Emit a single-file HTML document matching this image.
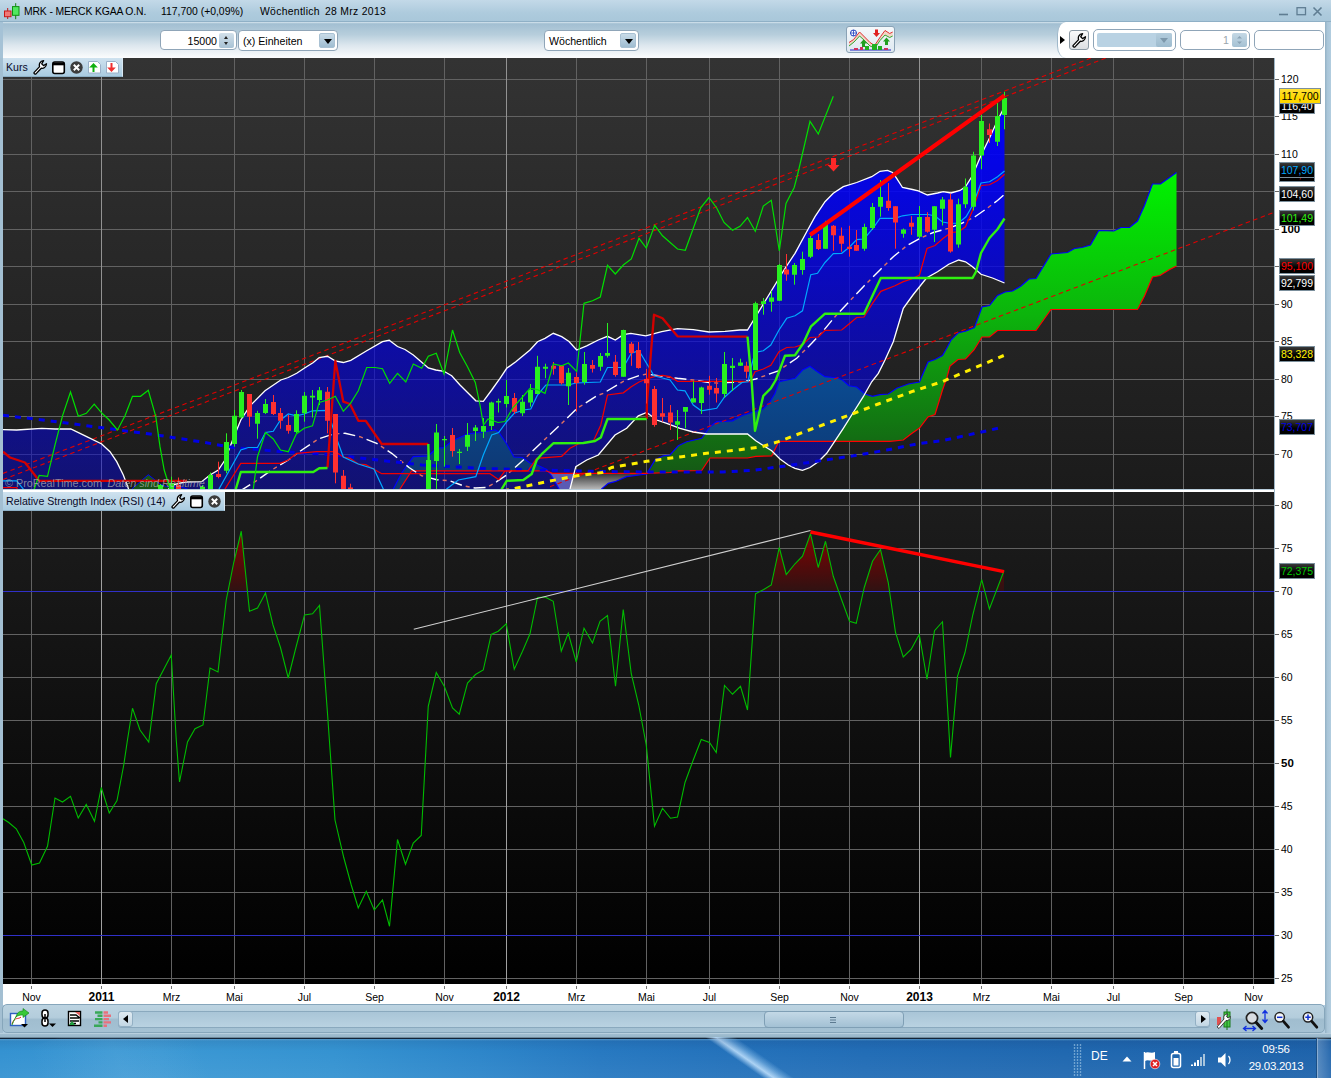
<!DOCTYPE html>
<html lang="de">
<head>
<meta charset="utf-8">
<title>MRK - MERCK KGAA O.N.</title>
<style>
*{box-sizing:border-box}
html,body{margin:0;padding:0}
body{width:1331px;height:1081px;position:relative;overflow:hidden;background:#b4cfe2;font-family:"Liberation Sans",sans-serif;font-size:10.5px;color:#000}
.abs{position:absolute}
#titlebar{position:absolute;left:0;top:0;width:1331px;height:22px;background:linear-gradient(#c3d9e8,#aecbdd 60%,#a9c7da);border-bottom:1px solid #8fb0c6}
#titlebar span{position:absolute;top:6px;font-size:10.4px;white-space:pre;color:#000}
#toolbar{position:absolute;left:0;top:22px;width:1331px;height:36px;background:linear-gradient(#d9e7f0 0,#a2bfd2 5%,#b7cedc 35%,#dde7ee 65%,#fbfcfd 100%)}
#toolbar:before{content:"";position:absolute;left:0;top:0;width:3px;height:36px;background:#a5c2d6}
.box{position:absolute;background:#fff;border:1px solid #8fa5b8;border-radius:4px;height:21px;top:8px}
.box span{position:absolute;top:3.5px;font-size:10.6px;white-space:pre}
.dd{position:absolute;top:2px;width:16px;height:15px;border-radius:2px;background:linear-gradient(#c9dbe8,#9fbdd1);border:1px solid #a9c1d3}
.dd:after{content:"";position:absolute;left:3.5px;top:5px;border:4px solid transparent;border-top:5px solid #000;border-bottom:0}
.spin{position:absolute;top:2px;width:15px;height:15px;border-radius:2px;background:linear-gradient(#d2e0ea,#a8c2d4)}
.spin:before{content:"";position:absolute;left:5px;top:3px;border:2.5px solid transparent;border-bottom:3px solid #222;border-top:0}
.spin:after{content:"";position:absolute;left:5px;top:9px;border:2.5px solid transparent;border-top:3px solid #222;border-bottom:0}
#rpanel{position:absolute;left:1057px;top:0px;width:268px;height:36px;background:#fff;border-top-left-radius:9px 12px;border-bottom-left-radius:9px 12px;border-left:1px solid #9fb8ca}
.chart{position:absolute;display:block}
#axisR{position:absolute;left:1274px;top:58px;width:51px;height:947px;background:#fff;border-left:1px solid #9db6c7}
#frameR{position:absolute;left:1325px;top:22px;width:6px;height:1016px;background:linear-gradient(90deg,#93b1c5,#a9c5d8 40%,#b2cddf)}
#frameL{position:absolute;left:0;top:58px;width:3px;height:980px;background:#a3bfd2}
#sep{position:absolute;left:3px;top:489px;width:1272px;height:3.5px;background:linear-gradient(#8fb0c6,#ffffff 35%,#ffffff 65%,#8fb0c6)}
.tick{position:absolute;left:1275px;width:4px;height:1px;background:#666}
.al{position:absolute;left:1281px;font-size:10.5px;line-height:13px;color:#000}
.al.b{font-weight:bold;font-size:11.5px}
.pl{position:absolute;left:1279px;width:36px;height:16px;border:1px solid #7b8f9c;font-size:10.5px;line-height:14px;text-align:center;white-space:nowrap;background-image:linear-gradient(rgba(255,255,255,.22),rgba(255,255,255,0) 60%)}
.pl.w{width:42px}
.tab{position:absolute;left:3px;height:19px;background:linear-gradient(#cfe2ef,#a9cbe0);border-right:1px solid #d9e8f2;border-bottom:1px solid #8eb0c6;font-size:10.6px;color:#0a0a28}
.tab span{position:absolute;left:3px;top:3px;white-space:nowrap}
.tab svg{position:absolute;top:2px}
#xaxis{position:absolute;left:3px;top:984px;width:1272px;height:21px;background:#fff}
.xt{position:absolute;top:986px;width:1px;height:3px;background:#777}
.xl{position:absolute;top:991px;width:60px;text-align:center;font-size:10.5px;line-height:13px}
.xl.yr{font-weight:bold;font-size:12px;top:991px}
#btool{position:absolute;left:2px;top:1004px;width:1323px;height:29px;border:1px solid #86a6bb;border-radius:5px;background:linear-gradient(#bcd3e1 0,#b4cddc 46%,#a0bdcf 54%,#a5c2d4 100%)}
#track{position:absolute;left:118px;top:1011px;width:1092px;height:17px;border:1px solid #8aa9be;border-radius:3px;background:linear-gradient(#a9c5d7,#b9d2e1)}
#thumb{position:absolute;left:764px;top:1011px;width:140px;height:17px;border:1px solid #7f9fb5;border-radius:4px;background:linear-gradient(#c3d8e6,#a3c1d4)}
.sbtn{position:absolute;top:1011px;width:15px;height:16px;border:1px solid #93b0c4;border-radius:3px;background:linear-gradient(#e0ebf2,#c3d7e4)}
#botframe{position:absolute;left:0;top:1033px;width:1331px;height:4px;background:linear-gradient(#c8dce8 0,#a0bdd0 30%,#98b6c9 100%)}
#taskbar{position:absolute;left:0;top:1037px;width:1331px;height:44px;overflow:hidden;
 background:linear-gradient(to bottom,#6f899b 0,#6f899b 1px,#142739 1px,#142739 2px,rgba(110,180,225,.75) 2px,rgba(110,180,225,0) 4px,rgba(0,0,0,0) 4px),linear-gradient(90deg,#3492d1 0,#3b98d4 12%,#3593d1 25%,#2d86ca 36%,#2779c1 45%,#2472bb 55%,#226db6 65%,#2068b0 80%,#1e63ab 100%)}
#taskbar>*{margin-top:1px}
#taskbar .shade{position:absolute;left:0;top:0;width:100%;height:100%;background:linear-gradient(rgba(0,0,40,.10),rgba(255,255,255,0) 30%,rgba(255,255,255,.06))}
#taskbar .tx{position:absolute;color:#fff;font-size:11.5px;white-space:nowrap;letter-spacing:-0.3px}
</style>
</head>
<body>
<div id="titlebar">
<svg class="abs" style="left:4px;top:1px" width="18" height="20" viewBox="0 0 18 20"><path d="M3.700 7v11" stroke="#c01818" stroke-width="1"/><rect x="0.500" y="10" width="6.500" height="5.700" fill="#f07878" stroke="#c81818"/><path d="M11.700 2.200v16" stroke="#108010"/><rect x="8.500" y="5.600" width="6.500" height="8.700" fill="#50e860" stroke="#109010"/></svg>
<span style="left:24px;letter-spacing:-0.15px">MRK - MERCK KGAA O.N.</span><span style="left:161px">117,700 (+0,09%)</span><span style="left:260px;letter-spacing:0.3px">Wöchentlich</span><span style="left:325px;letter-spacing:0.3px">28 Mrz 2013</span>
<svg class="abs" style="left:1276px;top:4px" width="50" height="14" viewBox="0 0 50 14"><path d="M3 10.5h9" stroke="#5f7d92" stroke-width="1.6"/><rect x="21" y="3.7" width="8.5" height="7" fill="none" stroke="#5f7d92" stroke-width="1.3"/><path d="M37.5 3.5l8 8M45.5 3.5l-8 8" stroke="#5f7d92" stroke-width="1.6"/></svg>
</div>
<div id="toolbar">
<div class="box" style="left:160px;width:77px;height:20px"><span style="right:19px">15000</span><div class="spin" style="left:58px"></div></div>
<div class="box" style="left:238px;width:100px"><span style="left:4px">(x) Einheiten</span><div class="dd" style="left:80px"></div></div>
<div class="box" style="left:544px;width:95px"><span style="left:4px">Wöchentlich</span><div class="dd" style="left:75px"></div></div>
<div class="abs" style="left:846px;top:4px;width:49px;height:27px;border:1px solid #8aa2b5;border-radius:3px;background:linear-gradient(#f4f8fb,#dfe9f1)">
<svg class="abs" style="left:1px;top:1px" width="45" height="23" viewBox="0 0 45 23"><path d="M1 14.500 L5.600 11.500 L11.600 4 L17.600 10 L22 14.500 L26.600 17.500 L32.600 8.500 L37 2.500 L41.700 5.500 L44.700 4 V8 L41.700 9.500 L37 7 L32 12.500 L27 20 L22 18 L17 13 L11.600 8 L6 14 L1 18z" fill="#f4c8b0" fill-opacity=".7"/><path d="M1 14.500 L5.600 11.500 L11.600 4 L17.600 10 L22 14.500 L26.600 17.500 L32.600 8.500 L37 2.500 L41.700 5.500 L44.700 4" stroke="#e03030" fill="none" stroke-width="1"/><path d="M1 18 L6 14 L11.600 8 L17 13 L22 18 L27 20 L32 12.500 L37 7 L41.700 9.500 L44.700 8" stroke="#30a830" fill="none" stroke-width="1"/><circle cx="5.500" cy="5" r="3" fill="#fff" stroke="#2040c0"/><path d="M5.500 2v6M2.500 5h6" stroke="#2040c0" stroke-width=".8"/><path d="M27 1.500h3v3.500h2l-3.500 4-3.500-4h2z" fill="#e02020"/><path d="M14 19h3v-3.500h2l-3.500-4-3.500 4h2z M37 17h3v-3.500h2l-3.500-4-3.500 4h2z" fill="#20a020"/><path d="M2 22h41" stroke="#2020c0"/><path d="M6 20h4v2h-4z M12 19h3v3h-3z M36 20h4v2h-4z" fill="#d03060"/><path d="M17 18h4v4h-4z M24 16h5v6h-5z M30 18h4v4h-4z" fill="#20b020"/></svg>
</div>
<div id="rpanel">
<svg class="abs" style="left:1px;top:13px" width="7" height="10" viewBox="0 0 7 10"><path d="M1 1l5 4-5 4z" fill="#000"/></svg>
<div class="abs" style="left:11px;top:8px;width:20px;height:20px;border:1px solid #8c9aa5;border-radius:3px;background:linear-gradient(#fafafa,#dcdfe2)"><svg class="abs" style="left:2px;top:1.500px" width="15" height="15" viewBox="0 0 15 15"><path d="M1.200 12.400 L6.600 6.600 C5.700 4 7 1.200 10.600 0.700 L8.700 3.800 L10.500 5.600 L13.500 3.800 C13.300 7.400 10.300 8.700 8.300 8.200 L3 13.900 C2 14.600 0.500 13.400 1.200 12.400z" fill="#fff" stroke="#000" stroke-width="1.300" stroke-linejoin="round"/></svg></div>
<div class="box" style="left:35px;top:7px;width:83px;height:22px;border-radius:5px"><div class="abs" style="left:3px;top:3px;width:75px;height:14px;background:#b9d2e3;border-radius:2px"></div><div class="abs" style="left:62px;top:3px;width:16px;height:14px;background:linear-gradient(#b4cddd,#9dbbce);border-radius:2px"></div><div class="abs" style="left:66px;top:8px;border:4px solid transparent;border-top:5px solid #7d98ab;border-bottom:0"></div></div>
<div class="box" style="left:122px;top:8px;width:70px;height:20px;border-radius:5px"><span style="right:20px;top:3px;color:#9aa5ad">1</span><div class="abs" style="left:51px;top:2px;width:15px;height:14px;border-radius:2px;background:linear-gradient(#c4d8e5,#a5c1d3)"><svg class="abs" style="left:4px;top:2px" width="7" height="10" viewBox="0 0 7 10"><path d="M1 3.500l2.500-2.500 2.500 2.500zM1 6.500l2.500 2.500 2.500-2.500z" fill="#8aa3b5"/></svg></div></div>
<div class="box" style="left:196px;top:8px;width:70px;height:20px;border-radius:5px"></div>
</div>
</div>
<div id="frameL"></div>
<svg class="chart" style="left:3px;top:58px" width="1272" height="431" viewBox="3 58 1272 431">
<defs>
<linearGradient id="bgp" x1="0" y1="58" x2="0" y2="489" gradientUnits="userSpaceOnUse"><stop offset="0" stop-color="#333333"/><stop offset="1" stop-color="#1b1b1b"/></linearGradient>
<linearGradient id="boll" x1="0" y1="58" x2="0" y2="489" gradientUnits="userSpaceOnUse"><stop offset="0" stop-color="#0000ff" stop-opacity="1"/><stop offset="0.306" stop-color="#0000f9" stop-opacity="0.87"/><stop offset="0.677" stop-color="#0402df" stop-opacity="0.68"/><stop offset="0.921" stop-color="#0808c8" stop-opacity="0.56"/><stop offset="1" stop-color="#0909c1" stop-opacity="0.52"/></linearGradient>
<linearGradient id="cg" x1="0" y1="172" x2="0" y2="489" gradientUnits="userSpaceOnUse"><stop offset="0" stop-color="#00f400"/><stop offset="0.45" stop-color="#0cb40c"/><stop offset="1" stop-color="#165016"/></linearGradient>
<linearGradient id="cgrey" x1="0" y1="473" x2="0" y2="492" gradientUnits="userSpaceOnUse"><stop offset="0" stop-color="#303030"/><stop offset="1" stop-color="#d0d0d0"/></linearGradient>
<linearGradient id="teal" x1="0" y1="360" x2="0" y2="489" gradientUnits="userSpaceOnUse"><stop offset="0" stop-color="#0a4e96"/><stop offset="1" stop-color="#0e3670"/></linearGradient>
<clipPath id="bclip"><polygon points="3,429.7 16.7,430 41.7,428.3 55,429 70.8,429 86.7,436.7 101.7,444 110,451.7 116.7,461.7 123.3,475 128.3,488.3 131,496 131,500 3,500"/><polygon points="163,496 172,485 185,482 201.7,481.7 210,475 218.3,470 225,460 233.3,438.3 240.8,420 250,405.8 265,390.8 280.8,380 288.3,377.5 296.7,373.3 304.2,368.3 313.3,362.5 319.2,357.5 327.5,356.3 335,360.8 343.3,362.5 350.8,360.3 366.7,350.8 382.5,341.7 389.2,340.3 397.5,346.5 405,349.5 413.3,355 420,360.8 428.3,368 435.8,370 444,371.3 451.7,375.8 460,385 468.3,393.3 475.8,400.8 483.3,401.3 491.7,390 500,378.3 506.7,368.3 515.8,361.7 520,358.3 530,350 537.5,341.7 545,338.3 553.3,333.3 561.7,336.7 569,341.5 576.7,350 586.7,345.8 598.3,340 607.5,336.3 615.3,340 623.3,334.7 630.8,333.3 645.8,335.8 661.7,331.7 677.5,328.7 693.3,329.7 709,332 725,331.3 740,330 747.5,330 784,270 795,253.3 806.7,231.7 815,216.7 825,201.7 833.3,193.3 843.3,186.7 856.7,182.5 871.7,176.7 880,171.3 887.5,170.3 892.5,172.5 896.7,178.3 902.5,187.5 912.5,189.5 918.3,190.8 927.5,195 937.5,193 943.3,191.7 951,193 960,190.5 965.5,186.75 972.5,175.5 981,155.5 989.5,138 997.5,120.5 1004.5,106.75 1004.5,283 992.5,278 981,274.25 972.5,266.75 965.5,261.75 958.75,260 948.75,264.25 937.5,271.75 926.5,278 913.3,294.5 903.3,308.3 898.3,325 893.3,341.7 885,360 878.3,373.3 871.7,381.8 863.3,396.7 853.3,412.5 843.3,428.3 835,440.8 826.7,453.3 818.3,461.7 810,467.5 802.5,470.3 795,468.3 788.3,465 780,459 771.7,450.8 755.8,440.8 747.5,434 706.7,434 693.3,432 680,428.3 666.7,423.3 656.7,420 646.7,412.5 638.3,415.8 626.7,428.3 615,435 598.3,455 586.7,460 575.8,466.7 570,489 569,496 163,500"/></clipPath>
</defs>
<rect x="3" y="58" width="1272" height="431" fill="url(#bgp)"/>
<path d="M3 79.5 H1275 M3 116.5 H1275 M3 154.5 H1275 M3 191.5 H1275 M3 229.5 H1275 M3 266.5 H1275 M3 304.5 H1275 M3 341.5 H1275 M3 379.5 H1275 M3 416.5 H1275 M3 454.5 H1275 M31.5 58 V489 M171.5 58 V489 M234.5 58 V489 M304.5 58 V489 M374.5 58 V489 M444.5 58 V489 M576.5 58 V489 M646.5 58 V489 M709.5 58 V489 M779.5 58 V489 M849.5 58 V489 M981.5 58 V489 M1051.5 58 V489 M1113.5 58 V489 M1183.5 58 V489 M1253.5 58 V489" stroke="#626262" stroke-width="1" fill="none"/>
<path d="M101.5 58 V489 M506.5 58 V489 M919.5 58 V489" stroke="#929292" stroke-width="1" fill="none"/>
<polygon points="131.7,489 148.3,474.7 160,484 166.7,486.7 183.3,487.5 195,492 195,496 131.7,496" fill="url(#cg)"/>
<polygon points="393.3,489 401.7,473 413.3,456.7 428.3,455.8 436.7,448.3 444,447.5 452.5,440.8 467.5,434 483.3,432 495,430 498.7,432 506.7,444 514,457 522.5,457.5 530,463 536.7,464.7 546.7,469.5 546,470.8 411.7,470.8 400,489 396,496" fill="url(#cg)"/>
<polygon points="546.7,470.8 552.5,473.3 646.7,473.3 646.7,474 626.7,476.7 615,481.7 608.3,483.3 601.7,489 598,496 561,496 559,489 551.7,476 546.7,469.5" fill="url(#cgrey)"/>
<polygon points="646.7,474 655,460 663.3,455.8 670,455 678.3,445.8 686.7,441.7 701.7,438.3 710,426.7 716.7,421.7 723.3,421.3 732.5,420.8 741.7,415.8 751.7,412.5 763.3,409 770,401.7 775,393.3 779,381.7 795,378.3 802.5,370 810,366.3 817.5,371.7 825,376.7 838.3,378 842.5,380 849,385.8 856.7,387 865,394 872.5,396.3 880,394.7 888.3,394 896.7,388.3 908.3,384 919.5,382 928,362 935,359.5 942.5,355.5 946.7,348.3 951,340 958,333 966,331 974.5,327.5 982,307 989.5,305.5 997.5,295.5 1005,292 1012.5,291 1021,286 1029,279 1036,278.5 1051,254 1067.5,252.5 1074.5,248.5 1082,247.5 1090.5,245 1098.75,230.5 1113.75,231 1121,227.5 1129.5,227.5 1137.5,221 1144.5,205.5 1152.5,184 1160.5,184 1176.5,172.5 1176.5,266 1168.75,270 1160,275.5 1152.5,277 1144.5,296 1137.5,309.5 1051,309.5 1036,330.5 997.5,330.5 989.5,337 982,337 974,350 965.5,359 958,359.5 950,366 946.7,378.3 942.5,390 935,414.5 928,417 919.5,428 911,434 903.3,440 890,441.3 779,441.3 771.7,455.8 755.8,456.3 747.5,458 710,458 701.7,470.5 678.3,470.8 670,472.5 646.7,473.3" fill="url(#cg)"/>
<polygon points="3,429.7 16.7,430 41.7,428.3 55,429 70.8,429 86.7,436.7 101.7,444 110,451.7 116.7,461.7 123.3,475 128.3,488.3 131,496 131,500 3,500" fill="url(#boll)"/>
<polygon points="163,496 172,485 185,482 201.7,481.7 210,475 218.3,470 225,460 233.3,438.3 240.8,420 250,405.8 265,390.8 280.8,380 288.3,377.5 296.7,373.3 304.2,368.3 313.3,362.5 319.2,357.5 327.5,356.3 335,360.8 343.3,362.5 350.8,360.3 366.7,350.8 382.5,341.7 389.2,340.3 397.5,346.5 405,349.5 413.3,355 420,360.8 428.3,368 435.8,370 444,371.3 451.7,375.8 460,385 468.3,393.3 475.8,400.8 483.3,401.3 491.7,390 500,378.3 506.7,368.3 515.8,361.7 520,358.3 530,350 537.5,341.7 545,338.3 553.3,333.3 561.7,336.7 569,341.5 576.7,350 586.7,345.8 598.3,340 607.5,336.3 615.3,340 623.3,334.7 630.8,333.3 645.8,335.8 661.7,331.7 677.5,328.7 693.3,329.7 709,332 725,331.3 740,330 747.5,330 784,270 795,253.3 806.7,231.7 815,216.7 825,201.7 833.3,193.3 843.3,186.7 856.7,182.5 871.7,176.7 880,171.3 887.5,170.3 892.5,172.5 896.7,178.3 902.5,187.5 912.5,189.5 918.3,190.8 927.5,195 937.5,193 943.3,191.7 951,193 960,190.5 965.5,186.75 972.5,175.5 981,155.5 989.5,138 997.5,120.5 1004.5,106.75 1004.5,283 992.5,278 981,274.25 972.5,266.75 965.5,261.75 958.75,260 948.75,264.25 937.5,271.75 926.5,278 913.3,294.5 903.3,308.3 898.3,325 893.3,341.7 885,360 878.3,373.3 871.7,381.8 863.3,396.7 853.3,412.5 843.3,428.3 835,440.8 826.7,453.3 818.3,461.7 810,467.5 802.5,470.3 795,468.3 788.3,465 780,459 771.7,450.8 755.8,440.8 747.5,434 706.7,434 693.3,432 680,428.3 666.7,423.3 656.7,420 646.7,412.5 638.3,415.8 626.7,428.3 615,435 598.3,455 586.7,460 575.8,466.7 570,489 569,496 163,500" fill="url(#boll)"/>
<g clip-path="url(#bclip)">
<polygon points="393.3,489 401.7,473 413.3,456.7 428.3,455.8 436.7,448.3 444,447.5 452.5,440.8 467.5,434 483.3,432 495,430 498.7,432 506.7,444 514,457 522.5,457.5 530,463 536.7,464.7 546.7,469.5 546,470.8 411.7,470.8 400,489 396,496" fill="url(#teal)"/>
<polygon points="546.7,470.8 552.5,473.3 646.7,473.3 646.7,474 626.7,476.7 615,481.7 608.3,483.3 601.7,489 598,496 561,496 559,489 551.7,476 546.7,469.5" fill="#5a5ab4"/>
<polygon points="646.7,474 655,460 663.3,455.8 670,455 678.3,445.8 686.7,441.7 701.7,438.3 710,426.7 716.7,421.7 723.3,421.3 732.5,420.8 741.7,415.8 751.7,412.5 763.3,409 770,401.7 775,393.3 779,381.7 795,378.3 802.5,370 810,366.3 817.5,371.7 825,376.7 838.3,378 842.5,380 849,385.8 856.7,387 865,394 872.5,396.3 880,394.7 888.3,394 896.7,388.3 908.3,384 919.5,382 928,362 935,359.5 942.5,355.5 946.7,348.3 951,340 958,333 966,331 974.5,327.5 982,307 989.5,305.5 997.5,295.5 1005,292 1012.5,291 1021,286 1029,279 1036,278.5 1051,254 1067.5,252.5 1074.5,248.5 1082,247.5 1090.5,245 1098.75,230.5 1113.75,231 1121,227.5 1129.5,227.5 1137.5,221 1144.5,205.5 1152.5,184 1160.5,184 1176.5,172.5 1176.5,266 1168.75,270 1160,275.5 1152.5,277 1144.5,296 1137.5,309.5 1051,309.5 1036,330.5 997.5,330.5 989.5,337 982,337 974,350 965.5,359 958,359.5 950,366 946.7,378.3 942.5,390 935,414.5 928,417 919.5,428 911,434 903.3,440 890,441.3 779,441.3 771.7,455.8 755.8,456.3 747.5,458 710,458 701.7,470.5 678.3,470.8 670,472.5 646.7,473.3" fill="url(#teal)"/>
</g>
<polyline points="131.7,489 148.3,474.7 160,484 166.7,486.7 183.3,487.5 195,492" fill="none" stroke="#0000ff" stroke-width="1" />
<polyline points="393.3,489 401.7,473 413.3,456.7 428.3,455.8 436.7,448.3 444,447.5 452.5,440.8 467.5,434 483.3,432 495,430 498.7,432 506.7,444 514,457 522.5,457.5 530,463 536.7,464.7 546.7,469.5 551.7,476 559,489 561,496" fill="none" stroke="#0000ff" stroke-width="1.2" />
<polyline points="598,496 601.7,489 608.3,483.3 615,481.7 626.7,476.7 646.7,474 655,460 663.3,455.8 670,455 678.3,445.8 686.7,441.7 701.7,438.3 710,426.7 716.7,421.7 723.3,421.3 732.5,420.8 741.7,415.8 751.7,412.5 763.3,409 770,401.7 775,393.3 779,381.7 795,378.3 802.5,370 810,366.3 817.5,371.7 825,376.7 838.3,378 842.5,380 849,385.8 856.7,387 865,394 872.5,396.3 880,394.7 888.3,394 896.7,388.3 908.3,384 919.5,382 928,362 935,359.5 942.5,355.5 946.7,348.3 951,340 958,333 966,331 974.5,327.5 982,307 989.5,305.5 997.5,295.5 1005,292 1012.5,291 1021,286 1029,279 1036,278.5 1051,254 1067.5,252.5 1074.5,248.5 1082,247.5 1090.5,245 1098.75,230.5 1113.75,231 1121,227.5 1129.5,227.5 1137.5,221 1144.5,205.5 1152.5,184 1160.5,184 1176.5,172.5" fill="none" stroke="#0000ff" stroke-width="1.2" />
<polyline points="396,496 400,489 411.7,470.8 546,470.8 552.5,473.3 646.7,473.3 670,472.5 678.3,470.8 701.7,470.5 710,458 747.5,458 755.8,456.3 771.7,455.8 779,441.3 890,441.3 903.3,440 911,434 919.5,428 928,417 935,414.5 942.5,390 946.7,378.3 950,366 958,359.5 965.5,359 974,350 982,337 989.5,337 997.5,330.5 1036,330.5 1051,309.5 1137.5,309.5 1144.5,296 1152.5,277 1160,275.5 1168.75,270 1176.5,266" fill="none" stroke="#ff0000" stroke-width="1.2" />
<path d="M3 473.4 L1091 58 M3 479.5 L1106 58 M550 486.7 L1275 212" stroke="#e00000" stroke-width="1.1" fill="none" stroke-dasharray="4.5 3.5"/>
<polyline points="3,429.7 16.7,430 41.7,428.3 55,429 70.8,429 86.7,436.7 101.7,444 110,451.7 116.7,461.7 123.3,475 128.3,488.3 131,496" fill="none" stroke="#ffffff" stroke-width="1.3" />
<polyline points="163,496 172,485 185,482 201.7,481.7 210,475 218.3,470 225,460 233.3,438.3 240.8,420 250,405.8 265,390.8 280.8,380 288.3,377.5 296.7,373.3 304.2,368.3 313.3,362.5 319.2,357.5 327.5,356.3 335,360.8 343.3,362.5 350.8,360.3 366.7,350.8 382.5,341.7 389.2,340.3 397.5,346.5 405,349.5 413.3,355 420,360.8 428.3,368 435.8,370 444,371.3 451.7,375.8 460,385 468.3,393.3 475.8,400.8 483.3,401.3 491.7,390 500,378.3 506.7,368.3 515.8,361.7 520,358.3 530,350 537.5,341.7 545,338.3 553.3,333.3 561.7,336.7 569,341.5 576.7,350 586.7,345.8 598.3,340 607.5,336.3 615.3,340 623.3,334.7 630.8,333.3 645.8,335.8 661.7,331.7 677.5,328.7 693.3,329.7 709,332 725,331.3 740,330 747.5,330 784,270 795,253.3 806.7,231.7 815,216.7 825,201.7 833.3,193.3 843.3,186.7 856.7,182.5 871.7,176.7 880,171.3 887.5,170.3 892.5,172.5 896.7,178.3 902.5,187.5 912.5,189.5 918.3,190.8 927.5,195 937.5,193 943.3,191.7 951,193 960,190.5 965.5,186.75 972.5,175.5 981,155.5 989.5,138 997.5,120.5 1004.5,106.75" fill="none" stroke="#ffffff" stroke-width="1.3" />
<polyline points="569,496 570,489 575.8,466.7 586.7,460 598.3,455 615,435 626.7,428.3 638.3,415.8 646.7,412.5 656.7,420 666.7,423.3 680,428.3 693.3,432 706.7,434 747.5,434 755.8,440.8 771.7,450.8 780,459 788.3,465 795,468.3 802.5,470.3 810,467.5 818.3,461.7 826.7,453.3 835,440.8 843.3,428.3 853.3,412.5 863.3,396.7 871.7,381.8 878.3,373.3 885,360 893.3,341.7 898.3,325 903.3,308.3 913.3,294.5 926.5,278 937.5,271.75 948.75,264.25 958.75,260 965.5,261.75 972.5,266.75 981,274.25 992.5,278 1004.5,283" fill="none" stroke="#ffffff" stroke-width="1.3" />
<polyline points="240,491 255,481.7 271.7,470 288.3,460 303.3,449 318.3,439 333.3,434 345,433.3 360,436.7 376.7,443.3 391.7,453.3 409,467.5 421.7,475.8 436.7,479.7 450,480.8 463.3,485.8 475,488 486.7,487.5 496.7,481.7 506.7,475 523.3,460 540,444 560,425 576.7,408.7 596.7,395.8 603.3,393.3 623.3,381.3 638.3,375.8 646.7,374 662.5,376.3 677.5,378.3 693.3,380 709,382.5 720,383.3 726.7,382.5 742,382 755.8,379 778.3,370.8 796.7,358.3 811.7,343.3 823.3,330.8 835,316.7 848.3,302.5 863.3,286.7 880,270 893.3,256.7 906.7,245.8 920,238.3 933.3,232.5 948.3,228.3 962.5,223 975,216.75 987.5,208 997.5,200.5 1004.5,194.25" fill="none" stroke="#ffffff" stroke-width="1.4" stroke-dasharray="12 12"/>
<polyline points="240,491 255,481.7 271.7,470 288.3,460 303.3,449 318.3,439 333.3,434 345,433.3 360,436.7 376.7,443.3 391.7,453.3 409,467.5 421.7,475.8 436.7,479.7 450,480.8 463.3,485.8 475,488 486.7,487.5 496.7,481.7 506.7,475 523.3,460 540,444 560,425 576.7,408.7 596.7,395.8 603.3,393.3 623.3,381.3 638.3,375.8 646.7,374 662.5,376.3 677.5,378.3 693.3,380 709,382.5 720,383.3 726.7,382.5 742,382 755.8,379 778.3,370.8 796.7,358.3 811.7,343.3 823.3,330.8 835,316.7 848.3,302.5 863.3,286.7 880,270 893.3,256.7 906.7,245.8 920,238.3 933.3,232.5 948.3,228.3 962.5,223 975,216.75 987.5,208 997.5,200.5 1004.5,194.25" fill="none" stroke="#e07060" stroke-width="1.4" stroke-dasharray="4 20" stroke-dashoffset="-16"/>
<polyline points="3,415.3 50,420.8 100,427.5 150,434 200,441.7 233.3,447.5 283.3,451.7 333.3,454.7 375,459.7 422,465 480,468.3 530,469.7 590,471.3 646.7,472 690,472 723,472 753.3,470.3 786.7,465.8 820,460.8 853.3,455.8 886.7,450 920,443.3 942,440.8 1003.75,427" fill="none" stroke="#0000e6" stroke-width="3" stroke-dasharray="6 6"/>
<polyline points="3,487.5 16.7,487.5 19,494" fill="none" stroke="#f00000" stroke-width="1.25" />
<polyline points="222,494 225,489 240.8,463.3 280,463.3 288.3,460 296.7,453.3 316.7,451.7 335.3,451.7 343.3,457 350,458.3 358.3,464 365.8,464.7 381.7,473.7 490,473.7 498.7,479.7 505,470.8 528,470.8 536.7,458.3 561.7,456.3 570,448.3 578.3,444 593.3,441.3 600.8,425 607.5,395 623.3,392.8 631.3,386.7 639,382 646.7,379 654,376.7 662.5,375.3 670,376.7 677.5,381.3 742,381.3 747,381.5 750,381.8 755,371.7 763.3,369 770.8,365.3 779,351.7 786.7,347.5 795,347 802.5,344.7 810,337.5 818.3,337 825,330.3 841.7,330 849,324 856.7,317.5 864,317 872.5,303.3 880.8,291.3 895,285.8 903.3,281.7 911.5,279 919.5,275 927,248.5 935,245.5 943,238.5 951,232.5 958.75,231.75 965.5,226.75 972.5,210.5 981,185.5 989.5,184.75 997.5,180.5 1004.5,174.25" fill="none" stroke="#f00000" stroke-width="1.25" />
<polyline points="3,480.8 16.7,480.8 23.3,489 25,494" fill="none" stroke="#00a8ff" stroke-width="1.2" />
<polyline points="217,494 219,489 240.8,450 248.3,447.5 257.5,447.5 265.5,432.5 273.3,431.3 280.5,420 288.3,414 296.3,415.8 304.2,414 312.5,410.8 327.5,410.3 335.3,435 343.3,457 358.3,464 374,469 383.3,489 385,494" fill="none" stroke="#00a8ff" stroke-width="1.2" />
<polyline points="444,494 446.7,489 458.3,480 475.8,476.7 483.3,455 491.7,435 498.7,432.5 506.7,421.7 514.2,413.3 523.3,410 530.8,409 537.5,395 545.8,385 568.3,385 575.8,383 600.3,382 607.5,367.5 623.3,367.5 631.3,353.3 639,350.8 654,375.8 662.5,378 670,380 677.5,390 685,390.8 693.3,405 701.3,410.8 716.7,408.3 724.2,397.5 732.5,390 742,382.5 748,381.8 751.7,365 755,352.5 763.3,350.8 770.8,345 779,330 786.7,318.3 795,315.8 802.5,310.8 810.8,274.7 817.5,273.3 825,262.5 833.3,253.7 841.7,253.3 849,247.5 856.7,239.7 864,239 872.5,229 880,218.3 895,218.3 902.5,215.8 911.7,214.5 928.3,214.5 935,216 942.5,222 951,223.5 958.5,223 966,216.75 972.5,205.5 981,183 989.5,181.75 997.5,176.75 1004.5,171" fill="none" stroke="#00a8ff" stroke-width="1.2" />
<polyline points="3,451.7 10,457.5 25,462.5 39.2,480.8 187,480.8" fill="none" stroke="#d40000" stroke-width="2.3" stroke-linejoin="round"/>
<polyline points="327.5,467.5 335.3,361 343.3,401.7 350,404 358.3,420.8 365.8,420.8 381.7,444 428.3,444" fill="none" stroke="#d40000" stroke-width="2.3" stroke-linejoin="round"/>
<polyline points="646.7,419 647,401.8 654,314.7 662.5,318.3 677.5,336.3 747.5,336.7" fill="none" stroke="#d40000" stroke-width="2.3" stroke-linejoin="round"/>
<polyline points="235,494 235.8,489 240.8,472 313.3,472 319.2,468.3 327.5,468" fill="none" stroke="#30f010" stroke-width="2.4" stroke-linejoin="round"/>
<polyline points="428.3,444 429.5,496" fill="none" stroke="#30f010" stroke-width="2.4" stroke-linejoin="round"/>
<polyline points="500,496 501.7,489 506.7,480.8 523.3,480 531.7,474 536.7,460 542.5,453.3 553.3,443.3 583.3,443 595,441 600.8,437.5 607.5,419 646.7,419" fill="none" stroke="#30f010" stroke-width="2.4" stroke-linejoin="round"/>
<polyline points="747.5,336.7 751.7,381.8 755,430.8 763.3,395.8 770.8,388.3 775.8,380 785,355.8 795,355.3 803.3,343.3 810.8,326.7 825,313.7 864,313.7 880.8,278 972.5,278 976,271.75 981,253 989.5,238 997.5,229.25 1004.5,218.5" fill="none" stroke="#30f010" stroke-width="2.4" stroke-linejoin="round"/>
<path d="M160.5 484 V492 M171.5 476.7 V492 M202.5 485 V492 M210.5 472.5 V492 M226.5 433.3 V473.3 M234.5 410 V446.7 M241.5 390 V418.3 M257.5 410.8 V438.7 M265.5 399 V414 M296.5 410.3 V433 M304.5 392 V421.7 M312.5 390 V417.5 M319.5 387 V405 M428.5 455 V492 M436.5 424 V492 M444.5 436 V466.7 M459.5 449 V464 M467.5 423 V451 M475.5 425 V441 M483.5 418 V438 M491.5 401.7 V430 M498.5 398.7 V412.5 M506.5 380 V407.5 M522.5 395 V416 M530.5 384 V406.7 M537.5 355.8 V394 M545.5 363.7 V378.3 M568.5 368 V405 M584.5 352 V384.7 M600.5 353 V370.8 M607.5 323 V357.5 M623.5 329.7 V376.7 M677.5 410 V440 M685.5 407 V428.3 M693.5 381.3 V402.5 M701.5 386.7 V414 M724.5 352 V397.5 M732.5 358 V391 M740.5 358.7 V366 M755.5 301.7 V370 M763.5 298 V314.7 M771.5 290.8 V311.7 M779.5 264 V301 M794.5 263 V284.7 M802.5 251.7 V274.7 M810.5 235.8 V258 M825.5 220.8 V248.7 M864.5 223.7 V250.8 M872.5 203 V230 M880.5 180 V216.7 M903.5 228.5 V237.7 M919.5 206 V238.5 M934.5 206.2 V242 M942.5 197 V225.5 M958.5 198.7 V247.7 M965.5 178.5 V208 M973.5 151.75 V210.5 M981.5 115 V169.25 M997.5 103 V146 M1004.5 91.75 V129.25" stroke="#28f020" stroke-width="1" fill="none"/>
<path d="M178.5 477.5 V492 M218.5 461.7 V478.3 M249.5 394 V426.7 M273.5 395 V415 M280.5 408 V428.7 M288.5 415 V433.7 M327.5 387 V433.3 M335.5 414 V483.3 M343.5 470 V492 M350.5 483.7 V492 M452.5 428 V456.7 M514.5 393 V414 M553.5 362 V374.7 M561.5 365 V384.5 M576.5 372.5 V411.7 M592.5 360 V372.5 M615.5 355 V376.7 M631.5 342 V365.8 M638.5 342 V368.7 M646.5 369 V403.5 M654.5 386 V426.7 M662.5 398 V421.7 M670.5 405 V430 M709.5 375.8 V394.7 M716.5 378 V402.5 M746.5 361.7 V378.3 M786.5 254 V280.8 M818.5 234 V250 M833.5 225 V250.8 M841.5 227.5 V251.7 M849.5 225.8 V256.7 M856.5 230 V250.8 M888.5 183 V210.8 M895.5 206.3 V248.7 M911.5 216.2 V234.8 M927.5 212.2 V232.7 M950.5 193.7 V252.7 M989.5 123.5 V143" stroke="#ff3030" stroke-width="1" fill="none"/>
<path d="M158 485 h5 V492 h-5z M169 483 h5 V492 h-5z M200 486.7 h5 V492 h-5z M208 475 h5 V492 h-5z M224 442 h5 V470.8 h-5z M232 415.8 h5 V444 h-5z M239 392 h5 V417.5 h-5z M255 413 h5 V423.7 h-5z M263 404 h5 V413 h-5z M294 414 h5 V432 h-5z M302 395.8 h5 V413.3 h-5z M310 395.8 h5 V397.5 h-5z M317 390.3 h5 V400 h-5z M426 460 h5 V492 h-5z M434 432.5 h5 V461 h-5z M442 439 h5 V440.2 h-5z M457 451.7 h5 V453 h-5z M465 435 h5 V446.7 h-5z M473 427.5 h5 V431 h-5z M481 426 h5 V431.7 h-5z M489 402.5 h5 V426 h-5z M496 401 h5 V402.5 h-5z M504 396 h5 V404 h-5z M520 401.7 h5 V413.3 h-5z M528 390 h5 V402.5 h-5z M535 366.7 h5 V394 h-5z M543 366.7 h5 V368.7 h-5z M566 372.8 h5 V386.3 h-5z M582 364 h5 V382 h-5z M598 356 h5 V366.7 h-5z M605 353 h5 V355.8 h-5z M621 330 h5 V376.7 h-5z M675 421.3 h5 V424.7 h-5z M683 407 h5 V411.7 h-5z M691 398.3 h5 V402.5 h-5z M699 387.5 h5 V403 h-5z M722 364 h5 V394 h-5z M730 365.8 h5 V368 h-5z M738 362.5 h5 V365.8 h-5z M753 303.3 h5 V370 h-5z M761 301.3 h5 V304 h-5z M769 297.5 h5 V301.7 h-5z M777 265 h5 V300.8 h-5z M792 265 h5 V274.7 h-5z M800 259 h5 V270 h-5z M808 238 h5 V256.7 h-5z M823 224 h5 V248.7 h-5z M862 227 h5 V248.7 h-5z M870 207 h5 V228 h-5z M878 197 h5 V206.7 h-5z M901 229.5 h5 V233.7 h-5z M917 217 h5 V236.7 h-5z M932 206.2 h5 V229.8 h-5z M940 199.6 h5 V208.7 h-5z M956 204.2 h5 V244.5 h-5z M963 186.75 h5 V204.25 h-5z M971 155.5 h5 V206.75 h-5z M979 121 h5 V155.5 h-5z M995 116 h5 V141.75 h-5z M1002 98 h5 V115 h-5z" fill="#28f020"/>
<path d="M176 485 h5 V492 h-5z M216 474 h5 V477 h-5z M247 394 h5 V416.7 h-5z M271 402 h5 V414 h-5z M278 413 h5 V420.8 h-5z M286 425 h5 V430.8 h-5z M325 391.7 h5 V420.8 h-5z M333 414 h5 V472.5 h-5z M341 475.8 h5 V492 h-5z M348 487.5 h5 V492 h-5z M450 435 h5 V451 h-5z M512 398 h5 V411.7 h-5z M551 365.8 h5 V368.7 h-5z M559 365.8 h5 V383.3 h-5z M574 377 h5 V383 h-5z M590 365 h5 V368.7 h-5z M613 361.7 h5 V375 h-5z M629 343.7 h5 V353 h-5z M636 350 h5 V368 h-5z M644 379 h5 V383.3 h-5z M652 389 h5 V425 h-5z M660 413.3 h5 V416.7 h-5z M668 412.5 h5 V422.5 h-5z M707 385.8 h5 V389.7 h-5z M714 388 h5 V393.5 h-5z M744 365.8 h5 V371.7 h-5z M784 269.5 h5 V274.5 h-5z M816 240 h5 V249 h-5z M831 225.8 h5 V235.3 h-5z M839 235.8 h5 V243.7 h-5z M847 246.7 h5 V249 h-5z M854 245 h5 V250.8 h-5z M886 200.8 h5 V208 h-5z M893 206.3 h5 V222.5 h-5z M909 222.7 h5 V226.7 h-5z M925 217 h5 V231.7 h-5z M948 199.6 h5 V251.5 h-5z M987 129.25 h5 V135 h-5z" fill="#ff3030"/>
<polyline points="33,494 34.2,489 39.2,475.3 47.5,476.3 55,445 62.5,415.8 70.5,392 78.3,416.3 86.3,413.3 94.2,404.2 102,413.3 109.2,420 117.5,430 125,415.8 132.5,396.3 140.5,396.3 148.3,390.3 155.8,416.7 160,446.7 164.2,470 168.3,483.3 170,489 171,494" fill="none" stroke="#00e000" stroke-width="1.2" />
<polyline points="252.7,494 253.3,489 257.5,456.7 265.5,432.5 273.3,439 280.5,450 288.3,451.7 296.3,434 304.2,428.3 312.5,425.8 319.2,402.5 327.5,400 335.3,396.3 343.3,411.3 350.5,403.3 358.3,390.8 366.7,367.5 375,367.5 382.5,368.7 389.7,383.3 397.5,373.3 405.8,382 413.3,364 421.7,368.3 428.3,356.3 436.3,353.3 444,374 452.5,330 459.7,352.5 467.5,366.7 475.3,382.5 480,405 483.5,425 488,419 498,422.5 505,421.5 513,407.5 523,396.5 530,388.3 537.5,389.7 545,393.3 553.3,364 561.7,365.8 568.3,363 576.7,371.5 584,303.3 592.5,300.8 600.3,297 607.5,265.3 615.3,274 623.3,265 631.3,259 639,238.3 646.3,248 654.7,225.3 662.5,235.8 677.5,249 685.3,250.3 693.3,228.3 700.8,207.5 709,197.5 716.7,208 724,222.5 732.5,230.3 740,226.3 747.5,217.5 755.3,231.3 763.3,206 771.3,200.2 779.3,251 786,203.5 794.2,187.5 797.5,175 810,121.3 818.3,134 833.3,96.3" fill="none" stroke="#00e000" stroke-width="1.2" />
<polyline points="503,491 523,486.7 546.7,481.7 576.7,475.8 602,472.5 611.7,467.5 646.7,461.3 681.7,456.7 706.7,453.3 740,449.7 762,446.7 778.3,441.7 811.7,429 845,416.7 878.3,404 911.7,391.7 942,381.7 1003.75,355.5" fill="none" stroke="#fff000" stroke-width="3" stroke-dasharray="6 6"/>
<path d="M810 235 L1004.5 95.5" stroke="#ff0000" stroke-width="4" fill="none"/>
<path d="M831 158 h5 v7 h3.5 l-6 6.5 l-6 -6.5 h3.5z" fill="#ff2828"/>
<text x="5" y="487" font-size="10.8" fill="#b4b4b4" fill-opacity="0.72" font-family="Liberation Sans, sans-serif">© ProRealTime.com <tspan font-style="italic" dx="2.5">Daten sind Realtime</tspan></text>
</svg>
<div id="sep"></div>
<svg class="chart" style="left:3px;top:492px" width="1272" height="492" viewBox="3 492 1272 492">
<defs>
<linearGradient id="bgr" x1="0" y1="492" x2="0" y2="984" gradientUnits="userSpaceOnUse"><stop offset="0" stop-color="#1d1d1d"/><stop offset="1" stop-color="#000000"/></linearGradient>
<linearGradient id="rf" x1="0" y1="528" x2="0" y2="592" gradientUnits="userSpaceOnUse"><stop offset="0" stop-color="#8a0000"/><stop offset="1" stop-color="#2e1212"/></linearGradient>
<clipPath id="c70"><rect x="3" y="492" width="1272" height="99"/></clipPath>
</defs>
<rect x="3" y="492" width="1272" height="492" fill="url(#bgr)"/>
<path d="M3 505.5 H1275 M3 548.5 H1275 M3 634.5 H1275 M3 677.5 H1275 M3 720.5 H1275 M3 763.5 H1275 M3 806.5 H1275 M3 849.5 H1275 M3 892.5 H1275 M3 978.5 H1275 M31.5 492 V984 M171.5 492 V984 M234.5 492 V984 M304.5 492 V984 M374.5 492 V984 M444.5 492 V984 M576.5 492 V984 M646.5 492 V984 M709.5 492 V984 M779.5 492 V984 M849.5 492 V984 M981.5 492 V984 M1051.5 492 V984 M1113.5 492 V984 M1183.5 492 V984 M1253.5 492 V984" stroke="#626262" stroke-width="1" fill="none"/>
<path d="M101.5 492 V984 M506.5 492 V984 M919.5 492 V984" stroke="#a0a0a0" stroke-width="1" fill="none"/>
<polygon points="3,818.75 8.75,822.5 16.25,828.75 23.75,842.5 31.75,865 39.5,863 47.5,846.25 55,798 62.5,802 70.5,796.25 78.25,818 86.25,804.5 94.5,821.25 101.25,787.5 109.25,813 117,800.5 123.75,765 127.5,739.75 132.5,708.25 140,730 148.75,742 156.25,683.75 171.25,655 176.25,739.75 179.5,782 187.5,742 195,728.75 203,725 210,668 218,672 226.25,600 233.75,562.5 241.25,531.25 249.5,611.25 257.5,608 265.5,593 273,625 280.5,647.5 288.25,678 296.25,646.25 304.5,615 312.5,613.75 319.5,605.5 327.4,712 335,820 343.75,857.5 351.25,885 358.25,908 366.25,891.25 374.25,910 382.5,900 389.5,926.25 397.5,839.5 405.5,864.25 413.25,843 421.25,835.5 428.25,706.25 436.25,672.5 444.25,686.25 452.5,708 459.25,714.25 467.5,683 475.5,674.5 483.25,670 491.25,634.5 498.25,631.25 506.25,623.75 514.25,669.25 522.5,651.25 530,633.75 537.5,597.5 545,597 553.25,601.25 561.25,651.25 568.25,633.25 576.25,662 584,628.25 592.5,643 600,621.25 607.5,615.5 615.5,686.25 623.25,609.5 631.25,673.75 638.75,705 646.25,745 654.5,826.25 662.5,808.25 670.5,818.25 677.5,817 685,782.5 693.25,760 701.25,739.5 709.5,742.5 716.25,752.5 724.5,685.5 732.5,694.25 740.5,686.25 747.5,710 755.5,593.75 763.75,589.5 771.25,585 779.25,547.5 786.25,574.5 795,563.75 802.5,556.25 810.5,533.75 818.25,567.5 825.5,541.25 833.25,576.25 841.25,598.75 849.5,621.25 856.25,623.25 864.25,587.5 872.5,561.25 880.5,549.5 888.25,582.5 895.5,632.5 903.25,657 911.25,649.25 919.25,634.5 927,679.25 934.5,630.75 942.5,621.75 950.5,757.5 957.5,676.25 965,652.5 972.75,615 981.7,579.6 989.4,609 1004,570.8 1004,600 3,600" fill="url(#rf)" clip-path="url(#c70)"/>
<path d="M3 591.5 H1275 M3 935.5 H1275" stroke="#3030c8" stroke-width="1.2" fill="none"/>
<polyline points="3,818.75 8.75,822.5 16.25,828.75 23.75,842.5 31.75,865 39.5,863 47.5,846.25 55,798 62.5,802 70.5,796.25 78.25,818 86.25,804.5 94.5,821.25 101.25,787.5 109.25,813 117,800.5 123.75,765 127.5,739.75 132.5,708.25 140,730 148.75,742 156.25,683.75 171.25,655 176.25,739.75 179.5,782 187.5,742 195,728.75 203,725 210,668 218,672 226.25,600 233.75,562.5 241.25,531.25 249.5,611.25 257.5,608 265.5,593 273,625 280.5,647.5 288.25,678 296.25,646.25 304.5,615 312.5,613.75 319.5,605.5 327.4,712 335,820 343.75,857.5 351.25,885 358.25,908 366.25,891.25 374.25,910 382.5,900 389.5,926.25 397.5,839.5 405.5,864.25 413.25,843 421.25,835.5 428.25,706.25 436.25,672.5 444.25,686.25 452.5,708 459.25,714.25 467.5,683 475.5,674.5 483.25,670 491.25,634.5 498.25,631.25 506.25,623.75 514.25,669.25 522.5,651.25 530,633.75 537.5,597.5 545,597 553.25,601.25 561.25,651.25 568.25,633.25 576.25,662 584,628.25 592.5,643 600,621.25 607.5,615.5 615.5,686.25 623.25,609.5 631.25,673.75 638.75,705 646.25,745 654.5,826.25 662.5,808.25 670.5,818.25 677.5,817 685,782.5 693.25,760 701.25,739.5 709.5,742.5 716.25,752.5 724.5,685.5 732.5,694.25 740.5,686.25 747.5,710 755.5,593.75 763.75,589.5 771.25,585 779.25,547.5 786.25,574.5 795,563.75 802.5,556.25 810.5,533.75 818.25,567.5 825.5,541.25 833.25,576.25 841.25,598.75 849.5,621.25 856.25,623.25 864.25,587.5 872.5,561.25 880.5,549.5 888.25,582.5 895.5,632.5 903.25,657 911.25,649.25 919.25,634.5 927,679.25 934.5,630.75 942.5,621.75 950.5,757.5 957.5,676.25 965,652.5 972.75,615 981.7,579.6 989.4,609 1004,570.8" fill="none" stroke="#00bc00" stroke-width="1.1" />
<path d="M413.75 629.25 L810.5 530.5" stroke="#d0d0d0" stroke-width="1.1" fill="none"/>
<path d="M810.5 532 L1004 571.6" stroke="#ff0000" stroke-width="3.5" fill="none"/>
</svg>
<div id="axisR"></div>
<div id="frameR"></div>
<div class="tick" style="top:79px"></div><div class="al" style="top:73px">120</div>
<div class="tick" style="top:116px"></div><div class="al" style="top:110px">115</div>
<div class="tick" style="top:154px"></div><div class="al" style="top:148px">110</div>
<div class="tick" style="top:191px"></div><div class="al" style="top:185px">105</div>
<div class="tick" style="top:229px"></div><div class="al b" style="top:223px">100</div>
<div class="tick" style="top:266px"></div><div class="al" style="top:260px">95</div>
<div class="tick" style="top:304px"></div><div class="al" style="top:298px">90</div>
<div class="tick" style="top:341px"></div><div class="al" style="top:335px">85</div>
<div class="tick" style="top:379px"></div><div class="al" style="top:373px">80</div>
<div class="tick" style="top:416px"></div><div class="al" style="top:410px">75</div>
<div class="tick" style="top:454px"></div><div class="al" style="top:448px">70</div>
<div class="pl" style="top:97.5px;color:#ffffff;background-color:#000">116,40</div>
<div class="pl w" style="top:88.25px;color:#000000;background-color:#ffd800">117,700</div>
<div class="pl" style="top:166px;color:#e00000;background-color:#000">107,27</div>
<div class="pl" style="top:162px;color:#00a8ff;background-color:#000">107,90</div>
<div class="pl" style="top:185.7px;color:#ffffff;background-color:#000">104,60</div>
<div class="pl" style="top:209.8px;color:#30f010;background-color:#000">101,49</div>
<div class="pl" style="top:257.8px;color:#ff0000;background-color:#000">95,100</div>
<div class="pl" style="top:275px;color:#ffffff;background-color:#000">92,799</div>
<div class="pl" style="top:346px;color:#fff000;background-color:#000">83,328</div>
<div class="pl" style="top:418.5px;color:#0000e6;background-color:#000">73,707</div>
<div class="tick" style="top:505px"></div><div class="al" style="top:499px">80</div>
<div class="tick" style="top:548px"></div><div class="al" style="top:542px">75</div>
<div class="tick" style="top:591px"></div><div class="al" style="top:585px">70</div>
<div class="tick" style="top:634px"></div><div class="al" style="top:628px">65</div>
<div class="tick" style="top:677px"></div><div class="al" style="top:671px">60</div>
<div class="tick" style="top:720px"></div><div class="al" style="top:714px">55</div>
<div class="tick" style="top:763px"></div><div class="al b" style="top:757px">50</div>
<div class="tick" style="top:806px"></div><div class="al" style="top:800px">45</div>
<div class="tick" style="top:849px"></div><div class="al" style="top:843px">40</div>
<div class="tick" style="top:892px"></div><div class="al" style="top:886px">35</div>
<div class="tick" style="top:935px"></div><div class="al" style="top:929px">30</div>
<div class="tick" style="top:978px"></div><div class="al" style="top:972px">25</div>
<div class="pl" style="top:563.1px;color:#00c800;background-color:#000">72,375</div>
<div class="tab" style="top:58px;width:120px"><span>Kurs</span>
<svg style="left:30px" width="90" height="15" viewBox="0 0 90 15"><path d="M1.200 12.400 L6.600 6.600 C5.700 4 7 1.200 10.600 0.700 L8.700 3.800 L10.500 5.600 L13.500 3.800 C13.300 7.400 10.300 8.700 8.300 8.200 L3 13.900 C2 14.600 0.500 13.400 1.200 12.400z" fill="#fff" stroke="#000" stroke-width="1.300" stroke-linejoin="round"/><rect x="19.800" y="2" width="11.500" height="11.500" rx="2" fill="#fff" stroke="#000" stroke-width="1.600"/><path d="M20 2.500h11v2.800h-11z" fill="#000"/><circle cx="43.500" cy="7.500" r="6.200" fill="#3c3c3c"/><path d="M40.800 4.800l5.400 5.400M46.200 4.800l-5.400 5.400" stroke="#fff" stroke-width="2"/><path d="M55.500 1.500h9l3 3v8.500h-12z" fill="#fff" stroke="#9ab0c8"/><path d="M61.500 12v-4.500h3.300l-4.300-4.500-4.300 4.500h3.300v4.500z" fill="#10b010"/><path d="M73.500 1.500h9l3 3v8.500h-12z" fill="#fff" stroke="#9ab0c8"/><path d="M77.500 3v4.500h-3.300l4.300 4.500 4.300-4.500h-3.300v-4.500z" fill="#f03030"/></svg>
</div>
<div class="tab" style="top:492px;width:222px"><span>Relative Strength Index (RSI) (14)</span>
<svg style="left:168px" width="54" height="15" viewBox="0 0 54 15"><path d="M1.200 12.400 L6.600 6.600 C5.700 4 7 1.200 10.600 0.700 L8.700 3.800 L10.500 5.600 L13.500 3.800 C13.300 7.400 10.300 8.700 8.300 8.200 L3 13.900 C2 14.600 0.500 13.400 1.200 12.400z" fill="#fff" stroke="#000" stroke-width="1.300" stroke-linejoin="round"/><rect x="19.800" y="2" width="11.500" height="11.500" rx="2" fill="#fff" stroke="#000" stroke-width="1.600"/><path d="M20 2.500h11v2.800h-11z" fill="#000"/><circle cx="43.500" cy="7.500" r="6.200" fill="#3c3c3c"/><path d="M40.800 4.800l5.400 5.400M46.200 4.800l-5.400 5.400" stroke="#fff" stroke-width="2"/></svg>
</div>
<div id="xaxis"></div>
<div class="xt" style="left:31px"></div>
<div class="xl" style="left:1.5px">Nov</div>
<div class="xt" style="left:101px"></div>
<div class="xl yr" style="left:71.5px">2011</div>
<div class="xt" style="left:171px"></div>
<div class="xl" style="left:141.5px">Mrz</div>
<div class="xt" style="left:234px"></div>
<div class="xl" style="left:204.5px">Mai</div>
<div class="xt" style="left:304px"></div>
<div class="xl" style="left:274.5px">Jul</div>
<div class="xt" style="left:374px"></div>
<div class="xl" style="left:344.5px">Sep</div>
<div class="xt" style="left:444px"></div>
<div class="xl" style="left:414.5px">Nov</div>
<div class="xt" style="left:506px"></div>
<div class="xl yr" style="left:476.5px">2012</div>
<div class="xt" style="left:576px"></div>
<div class="xl" style="left:546.5px">Mrz</div>
<div class="xt" style="left:646px"></div>
<div class="xl" style="left:616.5px">Mai</div>
<div class="xt" style="left:709px"></div>
<div class="xl" style="left:679.5px">Jul</div>
<div class="xt" style="left:779px"></div>
<div class="xl" style="left:749.5px">Sep</div>
<div class="xt" style="left:849px"></div>
<div class="xl" style="left:819.5px">Nov</div>
<div class="xt" style="left:919px"></div>
<div class="xl yr" style="left:889.5px">2013</div>
<div class="xt" style="left:981px"></div>
<div class="xl" style="left:951.5px">Mrz</div>
<div class="xt" style="left:1051px"></div>
<div class="xl" style="left:1021.5px">Mai</div>
<div class="xt" style="left:1113px"></div>
<div class="xl" style="left:1083.5px">Jul</div>
<div class="xt" style="left:1183px"></div>
<div class="xl" style="left:1153.5px">Sep</div>
<div class="xt" style="left:1253px"></div>
<div class="xl" style="left:1223.5px">Nov</div>
<div id="btool"></div>
<div id="track"></div>
<div id="thumb"><svg class="abs" style="left:64px;top:4px" width="8" height="8" viewBox="0 0 8 8"><path d="M1 1.500h6M1 4h6M1 6.500h6" stroke="#5c7a90" stroke-width="1"/></svg></div>
<div class="sbtn" style="left:118px"><svg class="abs" style="left:3px;top:3px" width="7" height="8" viewBox="0 0 7 8"><path d="M6 0v8l-5-4z" fill="#000"/></svg></div>
<div class="sbtn" style="left:1195px"><svg class="abs" style="left:4px;top:3px" width="7" height="8" viewBox="0 0 7 8"><path d="M1 0v8l5-4z" fill="#000"/></svg></div>
<!-- bottom-left icons -->
<svg class="abs" style="left:9px;top:1008px" width="105" height="22" viewBox="0 0 105 22">
<rect x="1.500" y="5.500" width="15" height="12" fill="#fff" stroke="#3060c0" stroke-width="1.400"/><path d="M3 16 C6 8 9 12 12 9" stroke="#e02020" fill="none"/><path d="M3 17 C7 6 10 6 14 4" stroke="#20a020" fill="none"/><path d="M7 9 C8 4 11 3 14 3 V0.500 L20 5 L14 9.500 V7 C11 7 9 7.500 7 9z" fill="#38c838" stroke="#108010" stroke-width=".6"/><path d="M12 16h7l-3.500 3.500z" fill="#000"/>
<rect x="33" y="2" width="6" height="8" rx="3" fill="#fff" stroke="#000" stroke-width="1.500"/><rect x="33" y="10" width="6" height="8" rx="3" fill="#fff" stroke="#000" stroke-width="1.500"/><path d="M36 6v8" stroke="#000" stroke-width="1.500"/><path d="M40 15.500h7l-3.500 3.500z" fill="#000"/>
<rect x="59.500" y="3.500" width="12" height="14" fill="#fff" stroke="#000" stroke-width="1.400"/><path d="M61 7h6l4 3M61 10h9M61 13h9M61 15.500h6" stroke="#000" stroke-width="1.300" fill="none"/><path d="M66 4h5v4z" fill="#e06060"/><path d="M60 17l3-4 3 4z" fill="#20a040"/>
<path d="M86 4.500h7.500M88.500 7.800h5M86 11.100h7.500M89.500 14.400h4M85 17.700h8.500" stroke="#38a858" stroke-width="2.400"/><path d="M94.500 4.500h4.500M94.500 7.800h7.500M94.500 11.100h5.500M94.500 14.400h7.500M94.500 17.700h3.500" stroke="#e8707c" stroke-width="2.400"/>
</svg>
<!-- bottom-right icons -->
<svg class="abs" style="left:1215px;top:1008px" width="110" height="24" viewBox="0 0 110 24">
<rect x="9" y="4" width="6" height="15" fill="#48c848" stroke="#187818"/><path d="M12 1v21" stroke="#187818"/><rect x="2" y="9" width="4" height="8" fill="#e05050"/><path d="M2 19 L9 11 C8 8 10 6 13 6 L11.500 8.500 L13 10 L15.500 8.500 C15.500 11.500 13 13 11 12.500 L4 20.500z" fill="#fff" stroke="#333" stroke-width=".9"/>
<circle cx="37" cy="10" r="5.600" fill="#d8dde2" stroke="#222" stroke-width="1.700"/><path d="M41.200 14.500l5.500 6" stroke="#111" stroke-width="3" stroke-linecap="round"/><path d="M50 3v11M47.500 5.500l2.500-3 2.500 3M47.500 11.500l2.500 3 2.500-3" stroke="#1030e0" fill="none" stroke-width="1.300"/><path d="M29 20.500h11M31.500 18l-3 2.500 3 2.500M37.500 18l3 2.500-3 2.500" stroke="#1030e0" fill="none" stroke-width="1.300"/>
<circle cx="64.700" cy="9.300" r="4.700" fill="#f4f6f8" stroke="#222" stroke-width="1.500"/><path d="M62 9.300h5.400" stroke="#1030d0" stroke-width="1.500"/><path d="M68.300 13.200l5.200 6" stroke="#111" stroke-width="2.800" stroke-linecap="round"/>
<circle cx="93" cy="9.300" r="4.700" fill="#f4f6f8" stroke="#222" stroke-width="1.500"/><path d="M90.300 9.300h5.400M93 6.600v5.400" stroke="#1030d0" stroke-width="1.500"/><path d="M96.600 13.200l5.200 6" stroke="#111" stroke-width="2.800" stroke-linecap="round"/>
</svg>
<div id="botframe"></div>
<div class="abs" style="left:0;top:1078px;width:1331px;height:3px;background:#fff;z-index:5"></div>
<div id="taskbar">
<div class="abs" style="left:741px;top:-40px;width:18px;height:120px;transform:rotate(-55deg);background:linear-gradient(90deg,rgba(170,210,245,0),rgba(185,220,250,.9) 35%,rgba(150,200,240,.45) 70%,rgba(150,200,240,0))"></div>
<div class="abs" style="left:40px;top:-20px;width:160px;height:90px;transform:rotate(-20deg);background:linear-gradient(90deg,rgba(140,200,235,0),rgba(150,205,238,.12) 50%,rgba(140,200,235,0))"></div>
<div class="shade"></div>
<svg class="abs" style="left:1073px;top:5px" width="10" height="34" viewBox="0 0 10 34"><g fill="#9cc4e4"><circle cx="1.500" cy="2" r=".8"/><circle cx="4.500" cy="2" r=".8"/><circle cx="7.500" cy="2" r=".8"/><circle cx="1.500" cy="5" r=".8"/><circle cx="4.500" cy="5" r=".8"/><circle cx="7.500" cy="5" r=".8"/><circle cx="1.500" cy="8" r=".8"/><circle cx="4.500" cy="8" r=".8"/><circle cx="7.500" cy="8" r=".8"/><circle cx="1.500" cy="11" r=".8"/><circle cx="4.500" cy="11" r=".8"/><circle cx="7.500" cy="11" r=".8"/><circle cx="1.500" cy="14" r=".8"/><circle cx="4.500" cy="14" r=".8"/><circle cx="7.500" cy="14" r=".8"/><circle cx="1.500" cy="17" r=".8"/><circle cx="4.500" cy="17" r=".8"/><circle cx="7.500" cy="17" r=".8"/><circle cx="1.500" cy="20" r=".8"/><circle cx="4.500" cy="20" r=".8"/><circle cx="7.500" cy="20" r=".8"/><circle cx="1.500" cy="23" r=".8"/><circle cx="4.500" cy="23" r=".8"/><circle cx="7.500" cy="23" r=".8"/><circle cx="1.500" cy="26" r=".8"/><circle cx="4.500" cy="26" r=".8"/><circle cx="7.500" cy="26" r=".8"/><circle cx="1.500" cy="29" r=".8"/><circle cx="4.500" cy="29" r=".8"/><circle cx="7.500" cy="29" r=".8"/><circle cx="1.500" cy="32" r=".8"/><circle cx="4.500" cy="32" r=".8"/><circle cx="7.500" cy="32" r=".8"/></g></svg>
<div class="tx" style="left:1091px;top:11px;font-size:12px;letter-spacing:0">DE</div>
<svg class="abs" style="left:1120px;top:8px" width="120" height="28" viewBox="0 0 120 28"><path d="M2.500 15.500l4.500-5 4.500 5z" fill="#fff"/><path d="M24.500 6v17" stroke="#fff" stroke-width="1.500"/><path d="M25 7c3-2 6 1 10-1v8c-4 2-7-1-10 1z" fill="#fff"/><circle cx="35" cy="18" r="4.800" fill="#e02020" stroke="#fff" stroke-width=".6"/><path d="M33 16l4 4M37 16l-4 4" stroke="#fff" stroke-width="1.500"/><rect x="51.500" y="7.500" width="9" height="14" rx="2" fill="none" stroke="#fff" stroke-width="1.500"/><rect x="54" y="5" width="4" height="2.500" fill="#fff"/><rect x="53.500" y="12" width="5" height="7.500" fill="#fff"/><path d="M72 20v-1.500M75 20v-3.500M78 20v-6" stroke="#fff" stroke-width="2"/><path d="M81 20v-9M84 20v-12" stroke="#a8c4dc" stroke-width="2"/><path d="M98 11.500h3l4.500-4.500v14l-4.500-4.500h-3z" fill="#fff"/><path d="M108.500 10c2 2 2 6 0 8" stroke="#fff" fill="none" stroke-width="1.300"/></svg>
<div class="tx" style="left:1240px;top:5px;width:72px;text-align:center">09:56</div>
<div class="tx" style="left:1240px;top:22px;width:72px;text-align:center">29.03.2013</div>
<div class="abs" style="left:1316px;top:0;width:15px;height:43px;border-left:1px solid #1a4f86;background:linear-gradient(90deg,rgba(255,255,255,.25),rgba(255,255,255,.05));box-shadow:inset 1px 0 0 rgba(255,255,255,.3)"></div>
</div>
</body>
</html>
